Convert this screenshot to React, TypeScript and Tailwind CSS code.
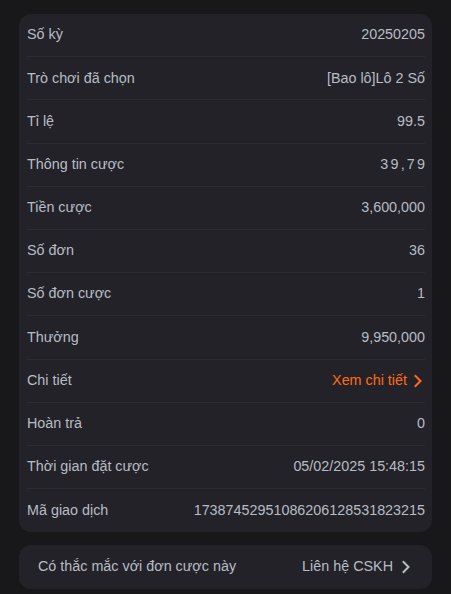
import React from "react";

const rows: { label: string; value: string; link?: boolean; spaced?: boolean }[] = [
  { label: "Số kỳ", value: "20250205" },
  { label: "Trò chơi đã chọn", value: "[Bao lô]Lô 2 Số" },
  { label: "Tỉ lệ", value: "99.5" },
  { label: "Thông tin cược", value: "39,79", spaced: true },
  { label: "Tiền cược", value: "3,600,000" },
  { label: "Số đơn", value: "36" },
  { label: "Số đơn cược", value: "1" },
  { label: "Thưởng", value: "9,950,000" },
  { label: "Chi tiết", value: "Xem chi tiết", link: true },
  { label: "Hoàn trả", value: "0" },
  { label: "Thời gian đặt cược", value: "05/02/2025 15:48:15" },
  { label: "Mã giao dịch", value: "17387452951086206128531823215" },
];

function Chevron({ className }: { className: string }) {
  return (
    <svg viewBox="0 0 10 14" className={className} fill="none" stroke="currentColor" strokeWidth="2" strokeLinecap="square">
      <path d="M2.5 2 L7.5 7 L2.5 12" />
    </svg>
  );
}

export default function App() {
  return (
    <div
      className="min-h-[594px] w-full bg-[#18181a] pt-[14px] px-[19px] text-[14.35px] text-[#b8bcc4]"
      style={{ fontFamily: '"Liberation Sans", Arial, sans-serif' }}
    >
      <div className="rounded-[12px] bg-[#222228] pl-2 pr-[7px]">
        {rows.map((r, i) => (
          <div
            key={r.label}
            className={`flex h-[43.2px] items-center justify-between ${i < rows.length - 1 ? "border-b border-[#2b2b32]" : ""}`}
          >
            <span>{r.label}</span>
            {r.link ? (
              <span className="mr-[2px] flex items-center gap-[6px] text-[#ff6b1a]">
                Xem chi tiết
                <Chevron className="h-[14px] w-[10px]" />
              </span>
            ) : (
              <span className={r.spaced ? "tracking-[2.2px] -mr-[2.2px]" : ""}>{r.value}</span>
            )}
          </div>
        ))}
      </div>
      <div className="mt-[13px] flex h-[44px] items-center justify-between rounded-[12px] bg-[#222228] pl-[19px] pr-[21px]">
        <span>Có thắc mắc với đơn cược này</span>
        <span className="flex items-center gap-[8px]">
          Liên hệ CSKH
          <Chevron className="h-[14px] w-[10px]" />
        </span>
      </div>
    </div>
  );
}
